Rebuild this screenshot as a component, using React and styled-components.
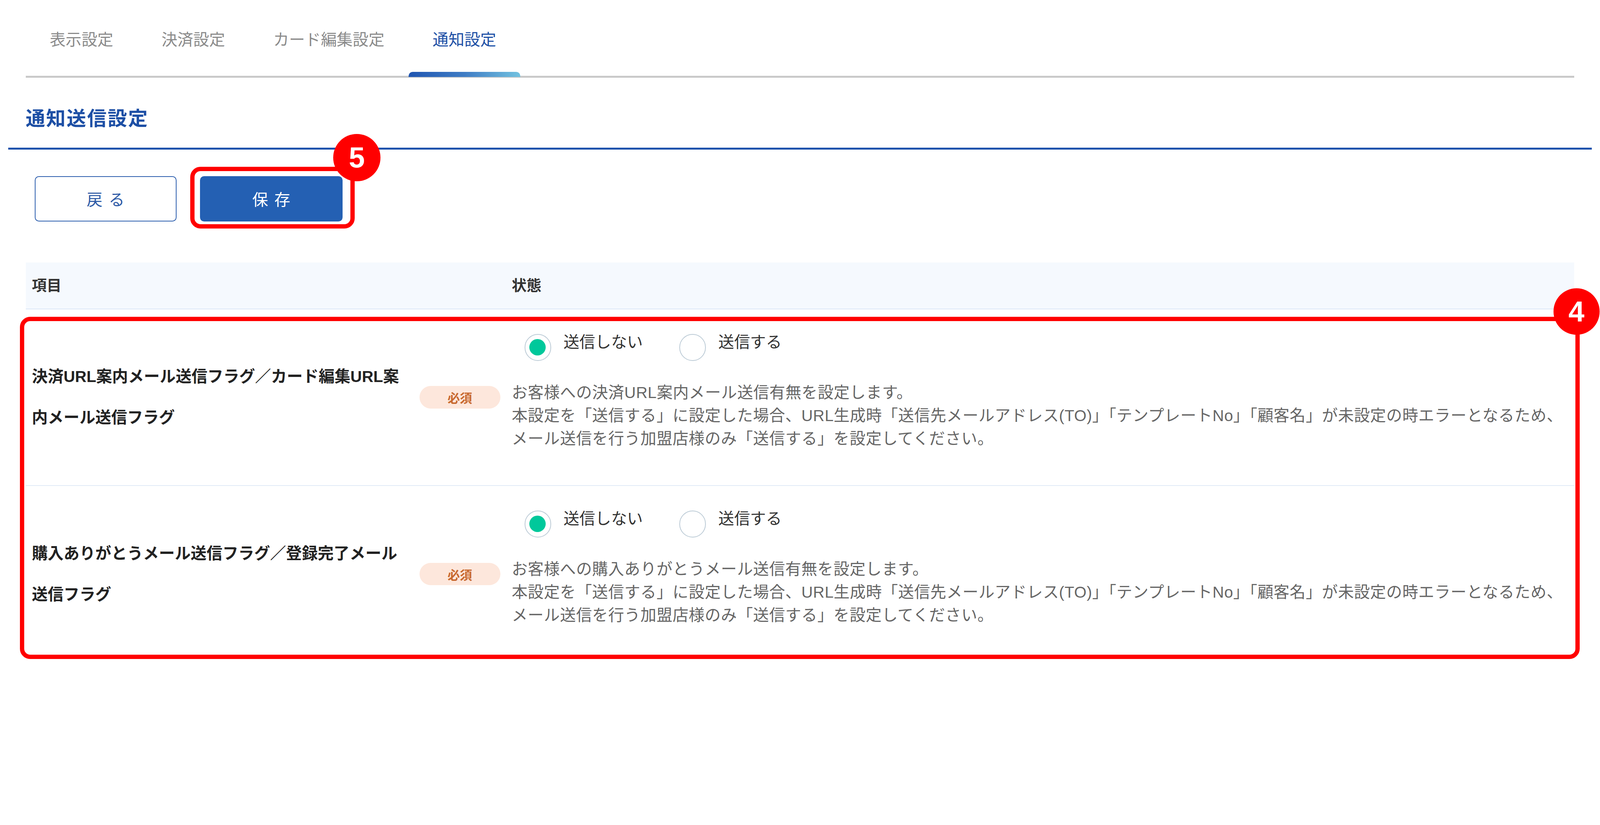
import React from "react";
import styled, { createGlobalStyle } from "styled-components";

const FONT = `"Liberation Sans", "Noto Sans CJK JP", "Noto Sans", sans-serif`;

const GlobalStyle = createGlobalStyle`
  html, body {
    margin: 0;
    padding: 0;
    background: #ffffff;
  }
  body {
    font-family: ${FONT};
    color: #333;
  }
  * { box-sizing: border-box; }
`;

const Page = styled.div`
  zoom: 2.625;
  padding: 8px 8px 30px;
  background: #fff;
`;

const TabBar = styled.nav`
  display: flex;
  margin: 0 17px;
  border-bottom: 2px solid #c9c9c9;
`;

const Tab = styled.button`
  position: relative;
  border: none;
  background: none;
  padding: 21px 23.5px 25px;
  font-family: ${FONT};
  font-size: 15.5px;
  line-height: 20px;
  font-weight: 400;
  color: ${(p) => (p.$active ? "#1d4fa5" : "#8b8b8b")};
  cursor: pointer;
  &::after {
    content: "";
    display: ${(p) => (p.$active ? "block" : "none")};
    position: absolute;
    left: 0;
    right: 0;
    bottom: -1px;
    height: 5px;
    border-radius: 4px 4px 0 0;
    background: linear-gradient(90deg, #1f55b1 0%, #3f7cc4 50%, #72c2e0 100%);
  }
`;

const SectionTitle = styled.h2`
  margin: 0;
  padding: 26px 17px 14px;
  font-family: ${FONT};
  font-size: 19px;
  line-height: 28px;
  letter-spacing: 1px;
  font-weight: 700;
  color: #1d4fa5;
  border-bottom: 2px solid #1e52ad;
`;

const Content = styled.div`
  padding: 0 17px;
`;

const ButtonRow = styled.div`
  display: flex;
  gap: 23px;
  margin-top: 26px;
  padding-left: 9px;
`;

const BaseButton = styled.button`
  height: 44px;
  border-radius: 4px;
  font-family: ${FONT};
  font-size: 15.5px;
  letter-spacing: 6px;
  padding: 0 0 0 6px;
  cursor: pointer;
`;

const OutlineButton = styled(BaseButton)`
  width: 138px;
  background: #fff;
  border: 1px solid #2d5fae;
  color: #2d5aa6;
`;

const PrimaryButton = styled(BaseButton)`
  width: 139px;
  background: #2460b3;
  border: none;
  color: #fff;
`;

const Annotated = styled.div`
  position: relative;
  display: flex;
`;

const HighlightBox = styled.div`
  position: absolute;
  top: ${(p) => p.$top}px;
  left: ${(p) => p.$left}px;
  right: ${(p) => p.$right}px;
  bottom: ${(p) => p.$bottom}px;
  border: 4.5px solid #ff0000;
  border-radius: 10px;
  pointer-events: none;
`;

const Marker = styled.div`
  position: absolute;
  top: ${(p) => p.$top}px;
  ${(p) => (p.$right !== undefined ? `right: ${p.$right}px;` : `left: ${p.$left}px;`)}
  width: ${(p) => p.$size}px;
  height: ${(p) => p.$size}px;
  border-radius: 50%;
  background: #ff0000;
  color: #fff;
  display: flex;
  align-items: center;
  justify-content: center;
  font-family: "Liberation Sans", Arial, sans-serif;
  font-weight: 700;
  font-size: 28px;
  line-height: 1;
  z-index: 2;
`;

const Table = styled.section`
  margin-top: 40px;
`;

const GridRow = styled.div`
  display: grid;
  grid-template-columns: 367px 79px 1fr;
  column-gap: 11px;
  padding-left: 6px;
  align-items: center;
`;

const HeaderRow = styled(GridRow)`
  height: 46px;
  background: #f5f9fe;
  border-bottom: 1px solid #dbe8f8;
`;

const HeadCell = styled.div`
  grid-column: ${(p) => p.$col || "auto"};
  font-size: 14.5px;
  font-weight: 700;
  color: #333;
  line-height: 20px;
`;

const Body = styled.div`
  position: relative;
`;

const Row = styled(GridRow)`
  & + & {
    border-top: 1px solid #e1ebf7;
  }
`;

const Label = styled.div`
  font-size: 15.5px;
  font-weight: 700;
  line-height: 40px;
  color: #222;
  padding-right: 2px;
`;

const RequiredBadge = styled.span`
  display: flex;
  align-items: center;
  justify-content: center;
  height: 22px;
  border-radius: 11px;
  background: #fde7dc;
  color: #c8692f;
  font-size: 12px;
  font-weight: 700;
`;

const StateCell = styled.div`
  padding: 24px 0 34px;
`;

const RadioGroup = styled.div`
  display: flex;
  gap: 35.5px;
  padding-left: 12.5px;
  height: 26px;
  margin-bottom: 20px;
`;

const RadioOption = styled.label`
  display: flex;
  align-items: flex-start;
  gap: 12px;
  cursor: pointer;
`;

const RadioCircle = styled.span`
  position: relative;
  width: 26px;
  height: 26px;
  border-radius: 50%;
  border: 1px solid #bccbd6;
  background: #fff;
  flex: none;
  &::after {
    content: "";
    display: ${(p) => (p.$checked ? "block" : "none")};
    position: absolute;
    left: 4px;
    top: 4px;
    width: 16px;
    height: 16px;
    border-radius: 50%;
    background: #00c89b;
  }
`;

const RadioText = styled.span`
  font-size: 15.5px;
  line-height: 16px;
  color: #333;
`;

const Description = styled.p`
  margin: 0;
  font-size: 15.5px;
  line-height: 22.5px;
  letter-spacing: 0.2px;
  color: #666;
  white-space: nowrap;
`;

const TABS = ["表示設定", "決済設定", "カード編集設定", "通知設定"];

const COMMON_NOTE =
  "本設定を「送信する」に設定した場合、URL生成時「送信先メールアドレス(TO)」「テンプレートNo」「顧客名」が未設定の時エラーとなるため、";
const COMMON_NOTE2 = "メール送信を行う加盟店様のみ「送信する」を設定してください。";

const ROWS = [
  {
    label: "決済URL案内メール送信フラグ／カード編集URL案内メール送信フラグ",
    lead: "お客様への決済URL案内メール送信有無を設定します。",
  },
  {
    label: "購入ありがとうメール送信フラグ／登録完了メール送信フラグ",
    lead: "お客様への購入ありがとうメール送信有無を設定します。",
  },
];

function SettingRow({ label, lead }) {
  return (
    <Row>
      <Label>{label}</Label>
      <RequiredBadge>必須</RequiredBadge>
      <StateCell>
        <RadioGroup>
          <RadioOption>
            <RadioCircle $checked />
            <RadioText>送信しない</RadioText>
          </RadioOption>
          <RadioOption>
            <RadioCircle />
            <RadioText>送信する</RadioText>
          </RadioOption>
        </RadioGroup>
        <Description>
          {lead}
          <br />
          {COMMON_NOTE}
          <br />
          {COMMON_NOTE2}
        </Description>
      </StateCell>
    </Row>
  );
}

export default function App() {
  return (
    <>
      <GlobalStyle />
      <Page>
        <TabBar>
          {TABS.map((t, i) => (
            <Tab key={t} $active={i === TABS.length - 1}>
              {t}
            </Tab>
          ))}
        </TabBar>
        <SectionTitle>通知送信設定</SectionTitle>
        <Content>
          <ButtonRow>
            <OutlineButton>戻る</OutlineButton>
            <Annotated>
              <PrimaryButton>保存</PrimaryButton>
              <HighlightBox $top={-9} $left={-9.5} $right={-12} $bottom={-7} />
              <Marker $top={-41} $left={130} $size={46}>
                5
              </Marker>
            </Annotated>
          </ButtonRow>
          <Table>
            <HeaderRow>
              <HeadCell>項目</HeadCell>
              <HeadCell $col={3}>状態</HeadCell>
            </HeaderRow>
            <Body>
              {ROWS.map((r) => (
                <SettingRow key={r.label} {...r} />
              ))}
              <HighlightBox $top={7} $left={-5.6} $right={-5.3} $bottom={3} />
              <Marker $top={-20.5} $right={-24.5} $size={45}>
                4
              </Marker>
            </Body>
          </Table>
        </Content>
      </Page>
    </>
  );
}
